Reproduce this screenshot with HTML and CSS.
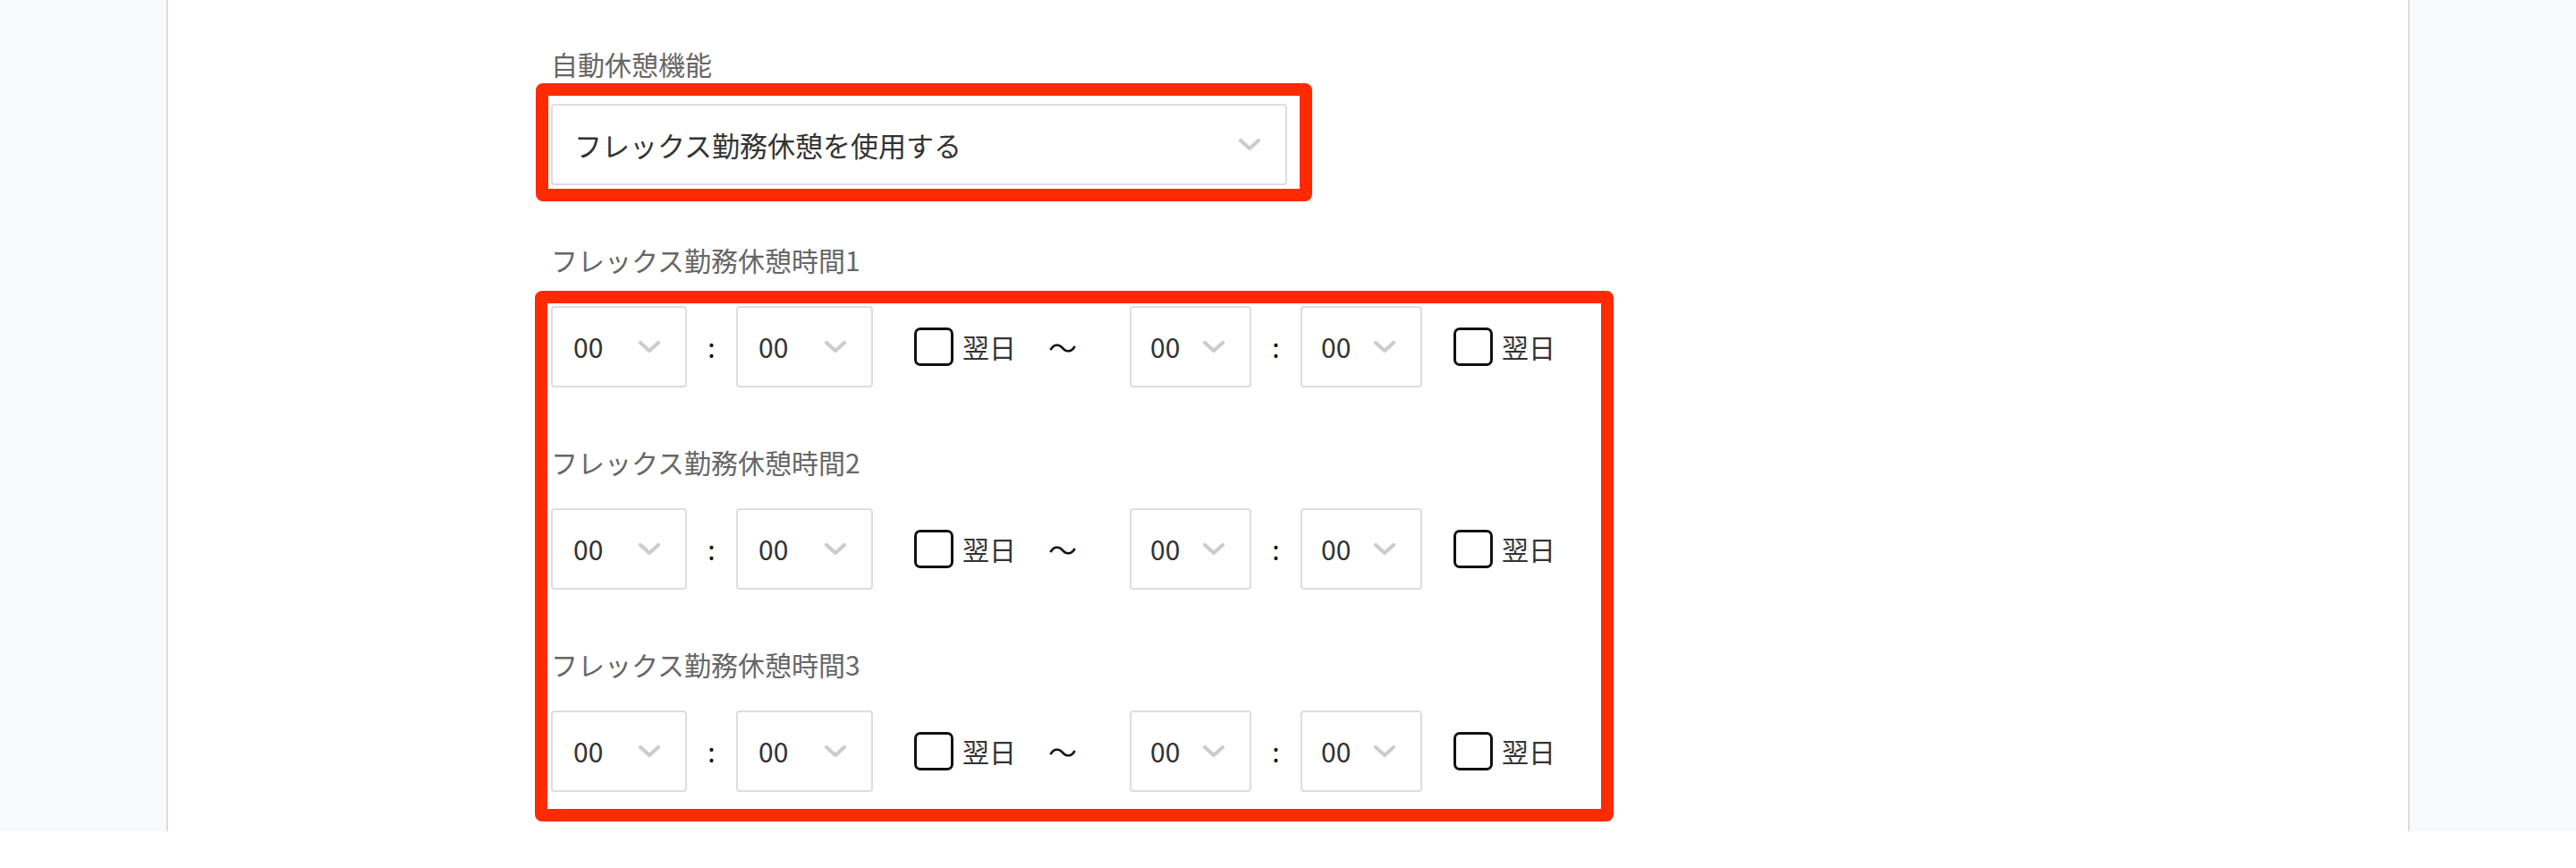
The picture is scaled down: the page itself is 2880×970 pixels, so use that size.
FILE: index.html
```html
<!DOCTYPE html>
<html lang="ja">
<head>
<meta charset="utf-8">
<title>自動休憩機能</title>
<link rel="stylesheet" href="styles.css">
</head>
<body>
<div class="page">
  <aside class="side side-left"></aside>
  <main class="content">
    <div class="form">
      <div class="group group-first">
        <div class="label">自動休憩機能</div>
        <div class="select select-wide">
          <span class="value value-wide">フレックス勤務休憩を使用する</span>
          <svg class="chev" viewBox="0 0 26 15" width="26" height="15"><polyline points="3,3 13,12 23,3"/></svg>
        </div>
      </div>

      <div class="group">
        <div class="label">フレックス勤務休憩時間1</div>
        <div class="row">
          <div class="select select-a"><span class="value">00</span><svg class="chev" viewBox="0 0 26 15" width="26" height="15"><polyline points="3,3 13,12 23,3"/></svg></div>
          <span class="colon">:</span>
          <div class="select select-b"><span class="value">00</span><svg class="chev" viewBox="0 0 26 15" width="26" height="15"><polyline points="3,3 13,12 23,3"/></svg></div>
          <span class="check check-first"></span><span class="next">翌日</span>
          <span class="tilde">〜</span>
          <div class="select select-c"><span class="value">00</span><svg class="chev" viewBox="0 0 26 15" width="26" height="15"><polyline points="3,3 13,12 23,3"/></svg></div>
          <span class="colon">:</span>
          <div class="select select-c"><span class="value">00</span><svg class="chev" viewBox="0 0 26 15" width="26" height="15"><polyline points="3,3 13,12 23,3"/></svg></div>
          <span class="check check-second"></span><span class="next">翌日</span>
        </div>
      </div>

      <div class="group">
        <div class="label">フレックス勤務休憩時間2</div>
        <div class="row">
          <div class="select select-a"><span class="value">00</span><svg class="chev" viewBox="0 0 26 15" width="26" height="15"><polyline points="3,3 13,12 23,3"/></svg></div>
          <span class="colon">:</span>
          <div class="select select-b"><span class="value">00</span><svg class="chev" viewBox="0 0 26 15" width="26" height="15"><polyline points="3,3 13,12 23,3"/></svg></div>
          <span class="check check-first"></span><span class="next">翌日</span>
          <span class="tilde">〜</span>
          <div class="select select-c"><span class="value">00</span><svg class="chev" viewBox="0 0 26 15" width="26" height="15"><polyline points="3,3 13,12 23,3"/></svg></div>
          <span class="colon">:</span>
          <div class="select select-c"><span class="value">00</span><svg class="chev" viewBox="0 0 26 15" width="26" height="15"><polyline points="3,3 13,12 23,3"/></svg></div>
          <span class="check check-second"></span><span class="next">翌日</span>
        </div>
      </div>

      <div class="group">
        <div class="label">フレックス勤務休憩時間3</div>
        <div class="row">
          <div class="select select-a"><span class="value">00</span><svg class="chev" viewBox="0 0 26 15" width="26" height="15"><polyline points="3,3 13,12 23,3"/></svg></div>
          <span class="colon">:</span>
          <div class="select select-b"><span class="value">00</span><svg class="chev" viewBox="0 0 26 15" width="26" height="15"><polyline points="3,3 13,12 23,3"/></svg></div>
          <span class="check check-first"></span><span class="next">翌日</span>
          <span class="tilde">〜</span>
          <div class="select select-c"><span class="value">00</span><svg class="chev" viewBox="0 0 26 15" width="26" height="15"><polyline points="3,3 13,12 23,3"/></svg></div>
          <span class="colon">:</span>
          <div class="select select-c"><span class="value">00</span><svg class="chev" viewBox="0 0 26 15" width="26" height="15"><polyline points="3,3 13,12 23,3"/></svg></div>
          <span class="check check-second"></span><span class="next">翌日</span>
        </div>
      </div>

      <div class="mark mark-select"></div>
      <div class="mark mark-times"></div>
    </div>
  </main>
  <aside class="side side-right"></aside>
</div>
</body>
</html>
```

FILE: styles.css
```css
* {
  box-sizing: border-box;
  margin: 0;
  padding: 0;
}

html,
body {
  background: #ffffff;
}

body {
  font-family: "Noto Sans CJK JP", "Noto Sans", sans-serif;
  color: #333333;
  font-size: 30px;
}

.page {
  display: flex;
  height: 929px;
}

.side {
  width: 188px;
  flex: 0 0 188px;
  background: #f8f9fb;
}

.side-left {
  border-right: 2px solid #dcdcdc;
}

.side-right {
  border-left: 2px solid #dcdcdc;
}

.content {
  flex: 1;
  background: #ffffff;
  padding: 49px 0 0 428px;
}

.form {
  position: relative;
  width: max-content;
}

.group {
  margin-bottom: 61px;
}

.group:last-of-type {
  margin-bottom: 0;
}

.label {
  font-size: 30px;
  line-height: 45px;
  color: #666666;
  margin-bottom: 29px;
}

.group-first .label {
  margin-bottom: 22px;
}

.select {
  height: 91px;
  border: 2px solid #dddddd;
  border-radius: 4px;
  background: #ffffff;
  display: flex;
  align-items: center;
  justify-content: space-between;
  padding: 0 27px 0 23px;
  flex: 0 0 auto;
}

.select-wide {
  width: 823px;
  padding-left: 24px;
}

.select-a {
  width: 152px;
}

.select-b {
  width: 153px;
}

.select-c {
  width: 136px;
  padding-left: 21px;
}

.value {
  font-size: 30px;
  line-height: 45px;
  color: #333333;
}

.value-wide {
  font-size: 31px;
}

.chev {
  display: block;
  flex: 0 0 auto;
}

.chev polyline {
  fill: none;
  stroke: #cccccc;
  stroke-width: 4.2;
  stroke-linecap: round;
  stroke-linejoin: round;
}

.row {
  display: flex;
  align-items: center;
  height: 91px;
}

.colon {
  width: 55px;
  flex: 0 0 55px;
  text-align: center;
  color: #111111;
  font-size: 30px;
  line-height: 45px;
}

.check {
  width: 44px;
  height: 43px;
  flex: 0 0 auto;
  border: 3px solid #111111;
  border-radius: 7px;
  background: #ffffff;
}

.check-first {
  margin-left: 46px;
}

.check-second {
  margin-left: 35px;
}

.next {
  margin-left: 10px;
  font-size: 30px;
  line-height: 45px;
  color: #333333;
  white-space: nowrap;
}

.tilde {
  width: 30px;
  flex: 0 0 30px;
  margin: 0 61px 0 36px;
  text-align: center;
  font-size: 32px;
  line-height: 45px;
  color: #111111;
}

.mark {
  position: absolute;
  border: 14px solid #ff2a00;
  border-radius: 8px;
  pointer-events: none;
}

.mark-select {
  left: -17px;
  top: 44px;
  width: 868px;
  height: 132px;
}

.mark-times {
  left: -18px;
  top: 276px;
  width: 1206px;
  height: 593px;
}
```
